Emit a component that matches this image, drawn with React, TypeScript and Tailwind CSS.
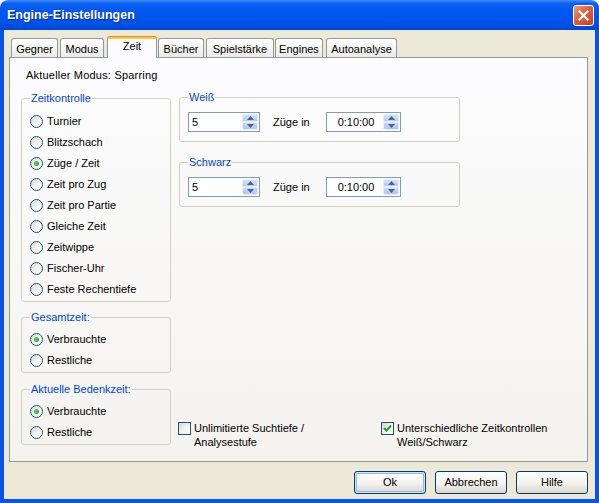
import React from "react";

function Radio({ label, checked }: { label: string; checked?: boolean }) {
  return (
    <div className="flex items-center h-[21px]">
      <span className="w-[13px] h-[13px] shrink-0 rounded-full border border-[#1c5180] bg-gradient-to-br from-[#d8d6cc] via-[#f2f2ee] to-white flex items-center justify-center">
        {checked && (
          <span className="w-[5px] h-[5px] rounded-full bg-[radial-gradient(circle_at_40%_40%,#5cd35c,#219f21)]" />
        )}
      </span>
      <span className="ml-[4px] whitespace-nowrap">{label}</span>
    </div>
  );
}

function Group({
  title,
  children,
  className = "",
}: {
  title: string;
  children: React.ReactNode;
  className?: string;
}) {
  return (
    <fieldset className={`border border-[#d0d0bf] rounded-[3px] pl-[8px] ${className}`}>
      <legend className="px-[1px] text-[#0046d5] leading-[13px]">{title}</legend>
      {children}
    </fieldset>
  );
}

function SpinButtons() {
  return (
    <div className="w-[16px] my-[1px] mr-[1px] flex flex-col gap-0">
      <div className="flex-1 rounded-t-[2px] border border-[#e6edfc] bg-gradient-to-b from-[#d4e0fb] to-[#b7cbf6] flex items-center justify-center">
        <svg width="7" height="4" viewBox="0 0 7 4">
          <path d="M3.5 0 L7 4 L0 4 Z" fill="#4d6185" />
        </svg>
      </div>
      <div className="flex-1 rounded-b-[2px] border border-[#e6edfc] bg-gradient-to-b from-[#c9d8fa] to-[#b0c5f5] flex items-center justify-center">
        <svg width="7" height="4" viewBox="0 0 7 4">
          <path d="M0 0 L7 0 L3.5 4 Z" fill="#4d6185" />
        </svg>
      </div>
    </div>
  );
}

function SpinInput({ value, width, center }: { value: string; width: string; center?: boolean }) {
  return (
    <div className={`${width} h-[20px] border border-[#7f9db9] bg-white flex`}>
      <div className={`flex-1 flex items-center ${center ? "justify-center pl-[2px]" : "pl-[3px]"}`}>
        {value}
      </div>
      <SpinButtons />
    </div>
  );
}

function Checkbox({ checked, lines }: { checked?: boolean; lines: string[] }) {
  return (
    <div className="flex items-start">
      <span className="mt-[1px] w-[13px] h-[13px] shrink-0 border border-[#1c5180] bg-gradient-to-br from-[#d8d6cc] via-[#f2f2ee] to-white flex items-center justify-center">
        {checked && (
          <svg width="9" height="9" viewBox="0 0 9 9">
            <path d="M1 4 L3.5 6.5 L8 1.5" stroke="#21a121" strokeWidth="2" fill="none" />
          </svg>
        )}
      </span>
      <span className="ml-[3px] leading-[14px] whitespace-nowrap">
        {lines[0]}
        <br />
        {lines[1]}
      </span>
    </div>
  );
}

function Button({ label, def }: { label: string; def?: boolean }) {
  return (
    <div
      className={`w-[72px] h-[23px] rounded-[3px] border border-[#003c74] bg-gradient-to-b from-white via-[#f5f4f0] to-[#dcd7cb] flex items-center justify-center ${
        def ? "shadow-[inset_0_0_0_1px_#cee7ff,inset_0_0_0_2px_#98b8ea]" : ""
      }`}
    >
      {label}
    </div>
  );
}

function Tab({ label, w, ml }: { label: string; w: string; ml: string }) {
  return (
    <div
      className={`${w} ${ml} h-[19px] border border-b-0 border-[#919b9c] rounded-t-[3px] bg-gradient-to-b from-white to-[#ecebe5] flex justify-center pt-[4px] whitespace-nowrap`}
    >
      {label}
    </div>
  );
}

export default function App() {
  return (
    <div className="w-[599px] h-[503px] flex flex-col font-['Liberation_Sans',Arial,sans-serif] text-[11px] leading-[13px] text-black bg-white">
      {/* Title bar */}
      <div className="h-[30px] shrink-0 rounded-t-[8px] bg-[linear-gradient(to_bottom,#3d8ffd_0%,#0a5ff0_12%,#0056ee_45%,#0052e8_80%,#0046d6_100%)] flex items-center pl-[7px] pr-[5px]">
        <span className="flex-1 text-white font-bold text-[12.5px] leading-[15px] pt-[1px] [text-shadow:1px_1px_0_#0b2a8a]">
          Engine-Einstellungen
        </span>
        <div className="w-[21px] h-[21px] rounded-[3px] border border-white bg-[linear-gradient(135deg,#f09a7d_0%,#e0603c_45%,#c8401c_100%)] flex items-center justify-center">
          <svg width="11" height="11" viewBox="0 0 11 11">
            <path d="M1.5 1.5 L9.5 9.5 M9.5 1.5 L1.5 9.5" stroke="white" strokeWidth="2.2" strokeLinecap="square" />
          </svg>
        </div>
      </div>

      {/* Body */}
      <div className="flex-1 flex flex-col bg-[#ece9d8] border-x-[4px] border-b-[4px] border-[#0b52e6]">
        {/* Tabs */}
        <div className="flex items-end h-[21px] mt-[6px] pl-[7px]">
          <Tab label="Gegner" w="w-[47px]" ml="ml-0" />
          <Tab label="Modus" w="w-[44px]" ml="ml-[2px]" />
          <div className="relative z-10 w-[50px] ml-[3px] h-[22px] -mb-[1px] bg-[#fcfcfe] border-x border-[#919b9c] rounded-t-[3px] flex flex-col">
            <div className="h-[3px] -mx-[1px] rounded-t-[3px] bg-[#ffc83c] border-t border-[#e68b2c]" />
            <div className="flex justify-center pt-[1px]">Zeit</div>
          </div>
          <Tab label="Bücher" w="w-[46px]" ml="ml-[1px]" />
          <Tab label="Spielstärke" w="w-[68px]" ml="ml-[2px]" />
          <Tab label="Engines" w="w-[48px]" ml="ml-[1px]" />
          <Tab label="Autoanalyse" w="w-[71px]" ml="ml-[3px]" />
        </div>

        {/* Panel */}
        <div className="h-[405px] ml-[5px] mr-[7px] border border-[#919b9c] bg-gradient-to-b from-[#fcfcfe] to-[#f4f3ee] flex flex-col">
          <div className="pt-[11px] pl-[16px] tracking-[0.2px]">Aktueller Modus: Sparring</div>
          <div className="flex mt-[9px] pl-[11px]">
            {/* Left column */}
            <div className="w-[150px] shrink-0 pt-[1px] flex flex-col">
              <Group title="Zeitkontrolle" className="pb-[1px]">
                <div className="pt-[6px]">
                  <Radio label="Turnier" />
                  <Radio label="Blitzschach" />
                  <Radio label="Züge / Zeit" checked />
                  <Radio label="Zeit pro Zug" />
                  <Radio label="Zeit pro Partie" />
                  <Radio label="Gleiche Zeit" />
                  <Radio label="Zeitwippe" />
                  <Radio label="Fischer-Uhr" />
                  <Radio label="Feste Rechentiefe" />
                </div>
              </Group>
              <Group title="Gesamtzeit:" className="pb-[1px] mt-[9px]">
                <div className="pt-[5px]">
                  <Radio label="Verbrauchte" checked />
                  <Radio label="Restliche" />
                </div>
              </Group>
              <Group title="Aktuelle Bedenkzeit:" className="pb-[1px] mt-[10px]">
                <div className="pt-[5px]">
                  <Radio label="Verbrauchte" checked />
                  <Radio label="Restliche" />
                </div>
              </Group>
            </div>

            {/* Right column */}
            <div className="w-[400px] shrink-0 ml-[8px] flex flex-col">
              <Group title="Weiß" className="w-[281px] pt-[8px] pb-[9px]">
                <div className="flex items-center">
                  <SpinInput value="5" width="w-[72px]" />
                  <span className="ml-[13px] w-[53px] whitespace-nowrap">Züge in</span>
                  <SpinInput value="0:10:00" width="w-[75px]" center />
                </div>
              </Group>
              <Group title="Schwarz" className="w-[281px] pt-[8px] pb-[9px] mt-[14px]">
                <div className="flex items-center">
                  <SpinInput value="5" width="w-[72px]" />
                  <span className="ml-[13px] w-[53px] whitespace-nowrap">Züge in</span>
                  <SpinInput value="0:10:00" width="w-[75px]" center />
                </div>
              </Group>
              <div className="flex mt-[214px] -ml-[1px]">
                <div className="w-[203px] shrink-0">
                  <Checkbox lines={["Unlimitierte Suchtiefe /", "Analysestufe"]} />
                </div>
                <div className="shrink-0">
                  <Checkbox checked lines={["Unterschiedliche Zeitkontrollen", "Weiß/Schwarz"]} />
                </div>
              </div>
            </div>
          </div>
        </div>

        {/* Buttons */}
        <div className="flex justify-end gap-[9px] mt-[9px] mr-[7px]">
          <Button label="Ok" def />
          <Button label="Abbrechen" />
          <Button label="Hilfe" />
        </div>
      </div>
    </div>
  );
}
